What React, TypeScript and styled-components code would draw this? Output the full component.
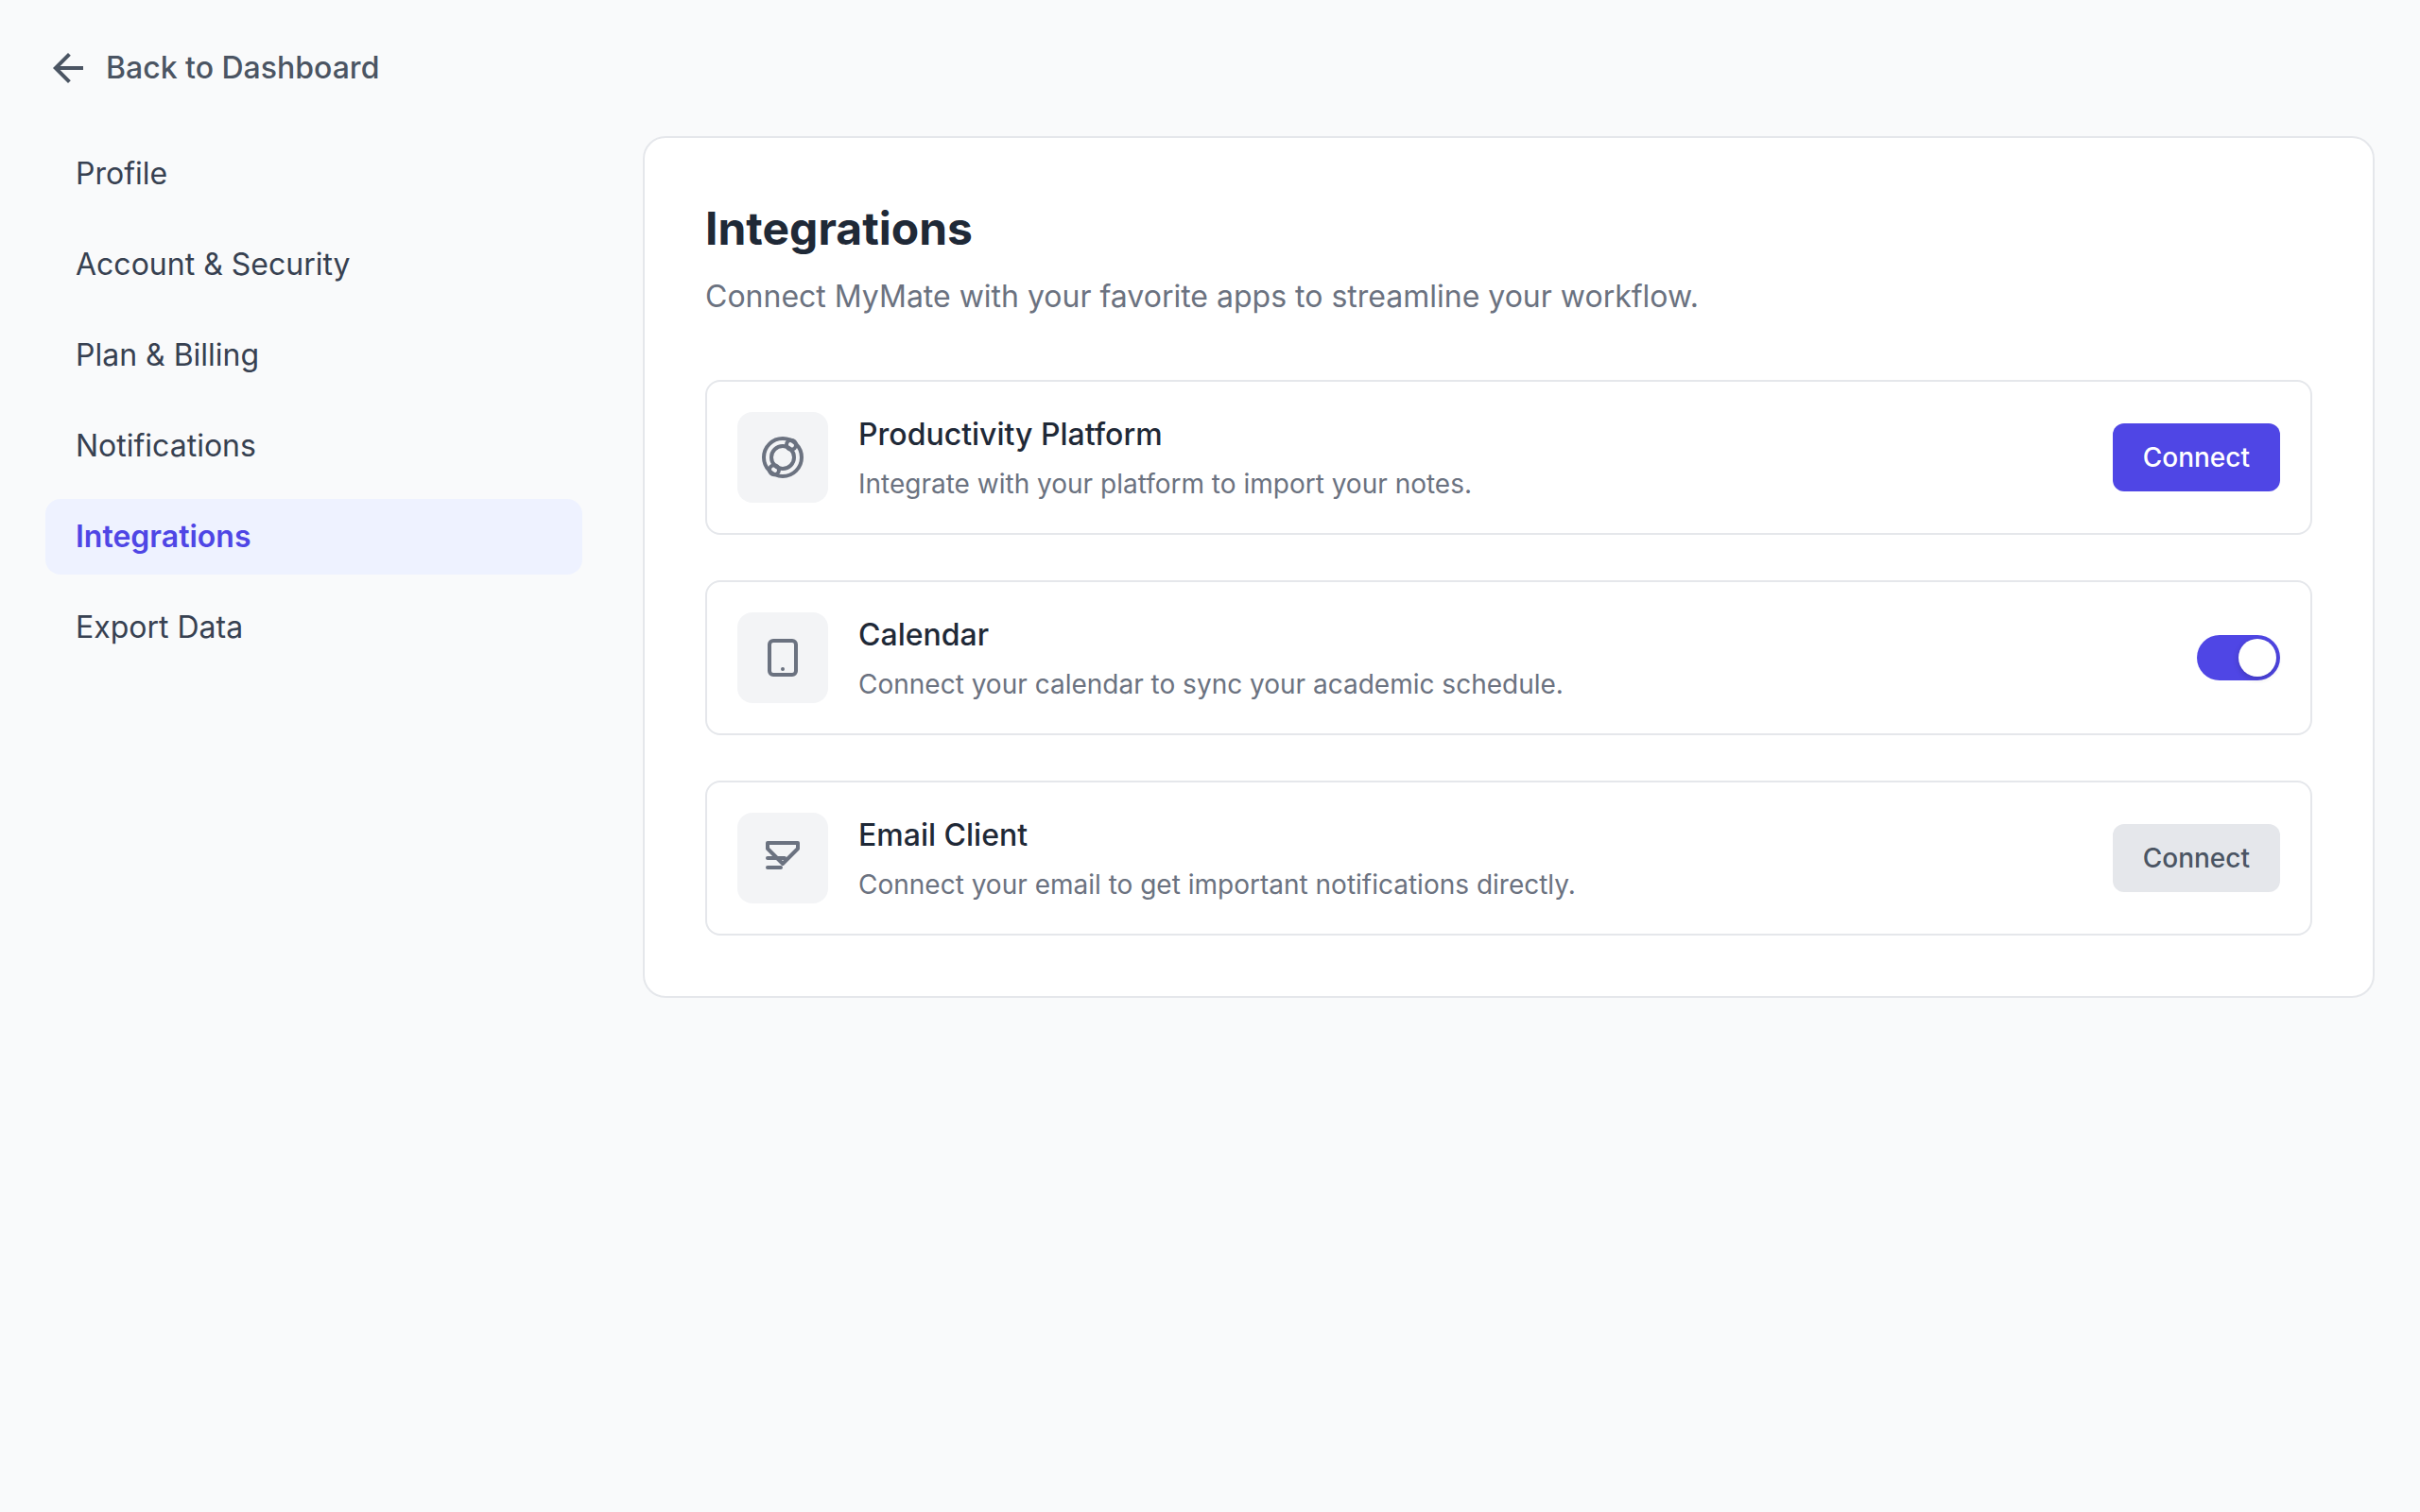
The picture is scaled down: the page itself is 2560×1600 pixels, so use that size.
import React, { useState } from "react";
import styled, { createGlobalStyle, css } from "styled-components";

const GlobalStyle = createGlobalStyle`
  *, *::before, *::after { box-sizing: border-box; }
  body {
    margin: 0;
    background: #f9fafb;
    font-family: Inter, "Liberation Sans", sans-serif;
    font-size: 32px;
    line-height: 48px;
  }
`;

const Page = styled.div`
  padding: 48px;
`;

const BackLink = styled.a`
  display: inline-flex;
  align-items: center;
  gap: 16px;
  color: #4b5563;
  font-weight: 500;
  text-decoration: none;
`;

const Header = styled.header`
  display: flex;
  margin-bottom: 48px;
`;

const Layout = styled.div`
  display: grid;
  grid-template-columns: repeat(4, minmax(0, 1fr));
  gap: 64px;
  align-items: start;
`;

const Nav = styled.nav`
  display: flex;
  flex-direction: column;
  gap: 16px;
`;

const NavLink = styled.a<{ $active: boolean }>`
  padding: 16px 32px;
  border-radius: 16px;
  color: ${(p) => (p.$active ? "#4f46e5" : "#374151")};
  background: ${(p) => (p.$active ? "#eef2ff" : "transparent")};
  font-weight: ${(p) => (p.$active ? 600 : 400)};
  text-decoration: none;
`;

const Panel = styled.main`
  grid-column: span 3;
  padding: 64px;
  background: #ffffff;
  border: 2px solid #e5e7eb;
  border-radius: 24px;
`;

const Title = styled.h1`
  margin: 0 0 16px;
  color: #1f2937;
  font-size: 48px;
  line-height: 64px;
  font-weight: 700;
`;

const Subtitle = styled.p`
  margin: 0 0 64px;
  color: #6b7280;
`;

const List = styled.div`
  display: flex;
  flex-direction: column;
  gap: 48px;
`;

const Row = styled.section`
  display: flex;
  align-items: center;
  gap: 32px;
  padding: 32px;
  border: 2px solid #e5e7eb;
  border-radius: 16px;
`;

const IconTile = styled.div`
  display: flex;
  flex: none;
  align-items: center;
  justify-content: center;
  width: 96px;
  height: 96px;
  border-radius: 16px;
  background: #f3f4f6;
  color: #6b7280;
`;

const RowText = styled.div`
  flex: 1;
  min-width: 0;
`;

const RowTitle = styled.h2`
  margin: 0 0 8px;
  color: #1f2937;
  font-size: 32px;
  line-height: 48px;
  font-weight: 500;
`;

const RowDescription = styled.p`
  margin: 0;
  color: #6b7280;
  font-size: 28px;
  line-height: 40px;
`;

const ConnectButton = styled.button<{ $primary: boolean }>`
  flex: none;
  padding: 16px 32px;
  border: 0;
  border-radius: 12px;
  font: inherit;
  font-size: 28px;
  line-height: 40px;
  font-weight: 500;
  cursor: pointer;
  ${(p) =>
    p.$primary
      ? css`
          background: #4f46e5;
          color: #ffffff;
        `
      : css`
          background: #e5e7eb;
          color: #4b5563;
        `}
`;

const Switch = styled.input`
  appearance: none;
  display: flex;
  flex: none;
  width: 88px;
  height: 48px;
  margin: 0;
  padding: 4px;
  border-radius: 24px;
  background: #e5e7eb;
  cursor: pointer;

  &::before {
    content: "";
    width: 40px;
    height: 40px;
    border-radius: 50%;
    background: #ffffff;
    box-shadow: 0 2px 6px rgba(0, 0, 0, 0.2);
  }

  &:checked {
    justify-content: flex-end;
    background: #4f46e5;
  }
`;

const Icon = styled.svg`
  display: block;
  flex: none;
  width: 48px;
  height: 48px;
  overflow: visible;
`;

const strokeProps = {
  viewBox: "0 0 24 24",
  fill: "none",
  stroke: "currentColor",
  strokeWidth: 2,
  strokeLinecap: "round" as const,
  strokeLinejoin: "round" as const,
  "aria-hidden": true,
};

const ArrowIcon = () => (
  <Icon viewBox="0 0 24 24" fill="currentColor" aria-hidden>
    <path d="M20 11H7.83l5.59-5.59L12 4l-8 8 8 8 1.41-1.41L7.83 13H20v-2z" />
  </Icon>
);

const PlatformIcon = () => (
  <Icon {...strokeProps}>
    <circle cx="12" cy="12" r="10" />
    <circle cx="12" cy="12" r="6" />
    <circle cx="16.5" cy="5.4" r="2.5" />
    <circle cx="7.5" cy="18.6" r="2.5" />
  </Icon>
);

const TabletIcon = () => (
  <Icon {...strokeProps}>
    <path d="M12 18h.01M7 21h10a2 2 0 002-2V5a2 2 0 00-2-2H7a2 2 0 00-2 2v14a2 2 0 002 2z" />
  </Icon>
);

const MailIcon = () => (
  <Icon {...strokeProps}>
    <path d="M4 4h16v3l-8 8-8-8V4z" />
    <path d="M4 12h9M4 17h7" />
  </Icon>
);

const navItems = [
  "Profile",
  "Account & Security",
  "Plan & Billing",
  "Notifications",
  "Integrations",
  "Export Data",
];

export default function App() {
  const [active, setActive] = useState("Integrations");
  const [calendarOn, setCalendarOn] = useState(true);

  return (
    <>
      <GlobalStyle />
      <Page>
        <Header>
          <BackLink href="#dashboard">
            <ArrowIcon />
            Back to Dashboard
          </BackLink>
        </Header>
        <Layout>
          <Nav>
            {navItems.map((item) => (
              <NavLink
                key={item}
                href="#"
                $active={item === active}
                aria-current={item === active ? "page" : undefined}
                onClick={() => setActive(item)}
              >
                {item}
              </NavLink>
            ))}
          </Nav>
          <Panel>
            <Title>Integrations</Title>
            <Subtitle>Connect MyMate with your favorite apps to streamline your workflow.</Subtitle>
            <List>
              <Row>
                <IconTile>
                  <PlatformIcon />
                </IconTile>
                <RowText>
                  <RowTitle>Productivity Platform</RowTitle>
                  <RowDescription>Integrate with your platform to import your notes.</RowDescription>
                </RowText>
                <ConnectButton type="button" $primary>
                  Connect
                </ConnectButton>
              </Row>
              <Row>
                <IconTile>
                  <TabletIcon />
                </IconTile>
                <RowText>
                  <RowTitle id="calendar-title">Calendar</RowTitle>
                  <RowDescription>Connect your calendar to sync your academic schedule.</RowDescription>
                </RowText>
                <Switch
                  type="checkbox"
                  role="switch"
                  aria-labelledby="calendar-title"
                  checked={calendarOn}
                  onChange={(e) => setCalendarOn(e.target.checked)}
                />
              </Row>
              <Row>
                <IconTile>
                  <MailIcon />
                </IconTile>
                <RowText>
                  <RowTitle>Email Client</RowTitle>
                  <RowDescription>Connect your email to get important notifications directly.</RowDescription>
                </RowText>
                <ConnectButton type="button" $primary={false}>
                  Connect
                </ConnectButton>
              </Row>
            </List>
          </Panel>
        </Layout>
      </Page>
    </>
  );
}
